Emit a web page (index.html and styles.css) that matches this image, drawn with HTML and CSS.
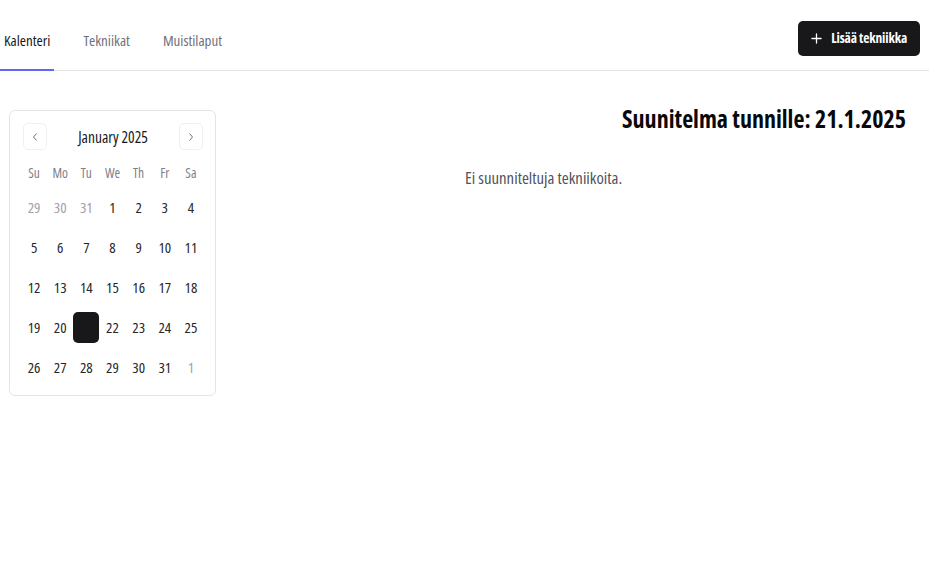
FILE: index.html
```html
<!DOCTYPE html>
<html lang="fi">
<head>
<meta charset="utf-8">
<title>Kalenteri</title>
<link rel="stylesheet" href="styles.css">
</head>
<body>
<header class="topbar">
  <nav class="tabs">
    <a class="tab active">Kalenteri</a>
    <a class="tab">Tekniikat</a>
    <a class="tab">Muistilaput</a>
  </nav>
  <button class="add-btn">
    <svg class="plus" viewBox="0 0 12 12" width="11" height="11"><path d="M6 1v10M1 6h10" stroke="#fff" stroke-width="1.4" stroke-linecap="round"/></svg>
    <span>Lisää tekniikka</span>
  </button>
</header>
<main class="content">
  <section class="calendar">
    <div class="cal-head">
      <button class="nav-btn"><svg viewBox="0 0 10 10" width="10" height="10"><path d="M6.5 1.5L3.5 5l3 3.5" fill="none" stroke="#71717a" stroke-width="1"/></svg></button>
      <div class="cal-title">January 2025</div>
      <button class="nav-btn"><svg viewBox="0 0 10 10" width="10" height="10"><path d="M3.5 1.5L6.5 5l-3 3.5" fill="none" stroke="#71717a" stroke-width="1"/></svg></button>
    </div>
    <div class="weekdays">
      <span>Su</span><span>Mo</span><span>Tu</span><span>We</span><span>Th</span><span>Fr</span><span>Sa</span>
    </div>
    <div class="days">
      <span class="out">29</span><span class="out">30</span><span class="out">31</span><span>1</span><span>2</span><span>3</span><span>4</span>
      <span>5</span><span>6</span><span>7</span><span>8</span><span>9</span><span>10</span><span>11</span>
      <span>12</span><span>13</span><span>14</span><span>15</span><span>16</span><span>17</span><span>18</span>
      <span>19</span><span>20</span><span class="sel">21</span><span>22</span><span>23</span><span>24</span><span>25</span>
      <span>26</span><span>27</span><span>28</span><span>29</span><span>30</span><span>31</span><span class="out">1</span>
    </div>
  </section>
  <section class="plan">
    <h1 class="plan-title">Suunitelma tunnille: 21.1.2025</h1>
    <p class="empty">Ei suunniteltuja tekniikoita.</p>
  </section>
</main>
</body>
</html>
```
FILE: styles.css
```css
* { box-sizing: border-box; }
html, body { margin: 0; padding: 0; background: #fff; }
body {
  font-family: "Open Sans", "Roboto", sans-serif;
  font-stretch: 75%;
  color: #18181b;
}
button { font-stretch: 75%; }
.topbar {
  height: 71px;
  border-bottom: 1px solid #e4e4e7;
  display: flex;
  align-items: center;
  justify-content: space-between;
  padding: 6px 9px 0 0;
}
.tabs {
  display: flex;
  align-self: stretch;
  gap: 25px;
}
.tab {
  display: flex;
  align-items: center;
  padding: 4px 4px 0;
  font-size: 15px;
  color: #71717a;
  border-bottom: 2px solid transparent;
  margin-bottom: -1px;
}
.tab.active {
  color: #18181b;
  border-bottom-color: #6366f1;
}
.add-btn {
  display: flex;
  align-items: center;
  gap: 9px;
  height: 35px;
  padding: 0 13px;
  background: #18181b;
  color: #fff;
  border: none;
  border-radius: 5px;
  font-family: inherit;
  font-size: 13.5px;
  letter-spacing: -0.15px;
  font-weight: 700;
}
.content {
  display: flex;
  align-items: flex-start;
  gap: 20px;
  padding: 39px 23px 0 9px;
}
.calendar {
  width: 207px;
  border: 1px solid #e4e4e7;
  border-radius: 6px;
  padding: 12px 11px 12px 11px;
}
.cal-head {
  display: flex;
  align-items: center;
  justify-content: space-between;
  height: 27px;
  padding: 0 1px 0 2px;
}
.nav-btn {
  width: 24px;
  height: 27px;
  border: 1px solid #f0f0f2;
  border-radius: 5px;
  background: #fff;
  display: flex;
  align-items: center;
  justify-content: center;
  padding: 0;
}
.cal-title {
  font-size: 15.5px;
  color: #18181b;
}
.weekdays, .days {
  display: grid;
  grid-template-columns: repeat(7, 1fr);
  text-align: center;
}
.weekdays {
  margin-top: 14px;
  height: 18px;
  line-height: 18px;
  font-size: 13.5px;
  color: #80808a;
}
.days {
  margin-top: 10px;
  row-gap: 9px;
  font-size: 15px;
  color: #27272a;
}
.days span {
  height: 31px;
  line-height: 31px;
  border-radius: 5px;
}
.days .out { color: #a1a1aa; }
.days .sel {
  background: #18181b;
  color: #18181b;
  width: 26px;
  justify-self: center;
}
.plan {
  flex: 1;
  margin-top: -6px;
}
.plan-title {
  margin: 0;
  text-align: right;
  font-size: 24px;
  line-height: 30px;
  font-weight: 700;
  color: #09090b;
}
.empty {
  margin: 33px 0 0 229px;
  font-size: 16.8px;
  line-height: 22px;
  color: #52525b;
}
```
